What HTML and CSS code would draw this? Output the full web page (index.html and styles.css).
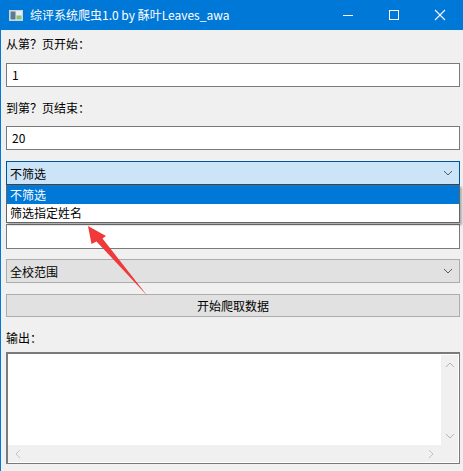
FILE: index.html
```html
<!DOCTYPE html>
<html lang="zh-CN">
<head>
<meta charset="utf-8">
<title>综评系统爬虫1.0 by 酥叶Leaves_awa</title>
<link rel="stylesheet" href="styles.css">
</head>
<body>
<div class="window">
  <div class="titlebar">
    <svg class="app-icon" width="14" height="11" viewBox="0 0 14 11">
      <rect x="0.5" y="0.5" width="13" height="10" fill="#dfe8ee" stroke="#c9d6de"/>
      <rect x="1.5" y="1.5" width="5" height="8" fill="#5d7b8c"/>
      <rect x="7.5" y="1.5" width="5" height="4" fill="#e9f0f3"/>
      <rect x="7.5" y="5.5" width="5" height="4" fill="#8fbf73"/>
    </svg>
    <div class="title">综评系统爬虫1.0 by 酥叶Leaves_awa</div>
    <div class="controls">
      <div class="ctl">
        <svg width="12" height="12" viewBox="0 0 12 12"><line x1="1" y1="6.5" x2="11" y2="6.5" stroke="#fff" stroke-width="1"/></svg>
      </div>
      <div class="ctl">
        <svg width="12" height="12" viewBox="0 0 12 12"><rect x="1.5" y="1.5" width="9" height="9" fill="none" stroke="#fff" stroke-width="1"/></svg>
      </div>
      <div class="ctl">
        <svg width="12" height="12" viewBox="0 0 12 12"><path d="M1 1 L11 11 M11 1 L1 11" stroke="#fff" stroke-width="1.1"/></svg>
      </div>
    </div>
  </div>

  <div class="content">
    <div class="label first">从第？页开始：</div>
    <div class="input input-a">1</div>
    <div class="label second">到第？页结束：</div>
    <div class="input input-b">20</div>

    <div class="combo combo-open">
      <span>不筛选</span>
      <svg class="chev" width="10" height="6" viewBox="0 0 10 6"><polyline points="1,1 5,5 9,1" fill="none" stroke="#5a5a5a" stroke-width="1"/></svg>
      <div class="dropdown">
        <div class="item selected">不筛选</div>
        <div class="item">筛选指定姓名</div>
      </div>
    </div>

    <div class="spacer"></div>
    <div class="input input-c"></div>

    <div class="combo combo-plain">
      <span>全校范围</span>
      <svg class="chev" width="10" height="6" viewBox="0 0 10 6"><polyline points="1,1 5,5 9,1" fill="none" stroke="#5a5a5a" stroke-width="1"/></svg>
    </div>

    <div class="button">开始爬取数据</div>

    <div class="label out">输出：</div>
    <div class="textarea">
      <div class="text-body"></div>
      <div class="vscroll">
        <svg width="10" height="6" viewBox="0 0 10 6"><polyline points="1,5 5,1 9,5" fill="none" stroke="#b4b4b4" stroke-width="1"/></svg>
        <svg width="10" height="6" viewBox="0 0 10 6"><polyline points="1,1 5,5 9,1" fill="none" stroke="#b4b4b4" stroke-width="1"/></svg>
      </div>
      <div class="hscroll">
        <svg width="6" height="10" viewBox="0 0 6 10"><polyline points="5,1 1,5 5,9" fill="none" stroke="#c4c4c4" stroke-width="1"/></svg>
        <svg width="6" height="10" viewBox="0 0 6 10"><polyline points="1,1 5,5 1,9" fill="none" stroke="#c4c4c4" stroke-width="1"/></svg>
      </div>
      <div class="corner"></div>
    </div>
  </div>

  <svg class="arrow" width="463" height="471" viewBox="0 0 463 471">
    <polygon points="88,226 106,236 102.5,238.5 147.5,296 96.5,241.5 91.5,244" fill="#f0393a"/>
  </svg>
</div>
</body>
</html>
```

FILE: styles.css
```css
* { box-sizing: border-box; }

html, body {
  margin: 0;
  padding: 0;
  background: #f0f0f0;
}

body {
  font-family: "Noto Sans CJK SC", "Noto Sans", sans-serif;
  font-size: 12px;
  color: #000;
}

.window {
  position: relative;
  width: 463px;
  height: 471px;
  background: #f0f0f0;
  border-left: 1px solid #0078d7;
  overflow: hidden;
}

.titlebar {
  height: 30px;
  background: #0078d7;
  display: flex;
  align-items: center;
  color: #fff;
  margin-left: -1px;
}

.app-icon {
  margin-left: 9px;
  margin-right: 7px;
}

.title {
  flex: 1;
  font-size: 12px;
  line-height: 30px;
  white-space: nowrap;
}

.controls {
  display: flex;
  height: 30px;
}

.ctl {
  width: 46px;
  height: 30px;
  display: flex;
  align-items: center;
  justify-content: center;
}

.content {
  padding: 0 3px 0 5px;
  display: flex;
  flex-direction: column;
}

.label {
  height: 18px;
  line-height: 18px;
  white-space: nowrap;
  flex: none;
}

.label.first { margin-top: 5px; }
.label.second { margin-top: 12px; }
.label.out { margin-top: 12px; }

.input {
  flex: none;
  height: 24px;
  background: #fff;
  border: 1px solid #7a7a7a;
  padding-left: 5px;
  line-height: 22px;
}

.input-a { margin-top: 10px; }
.input-b { margin-top: 9px; }
.input-c { margin-top: 11px; height: 25px; }

.combo {
  flex: none;
  position: relative;
  height: 24px;
  padding-left: 3px;
  display: flex;
  align-items: center;
  justify-content: space-between;
  padding-right: 6px;
}

.combo-open {
  margin-top: 11px;
  background: #cce4f7;
  border: 1px solid #005499;
}

.combo-plain {
  margin-top: 10px;
  background: #e1e1e1;
  border: 1px solid #adadad;
}

.dropdown {
  position: absolute;
  top: 23px;
  left: -1px;
  right: -1px;
  background: #fff;
  border: 1px solid #646464;
  box-shadow: 2px 2px 2px rgba(0, 0, 0, 0.28);
  z-index: 2;
}

.item {
  height: 18px;
  line-height: 18px;
  padding-left: 3px;
  white-space: nowrap;
}

.item.selected {
  background: #0078d7;
  color: #fff;
}

.spacer {
  flex: none;
  height: 28px;
}

.button {
  flex: none;
  margin-top: 11px;
  height: 23px;
  background: #e1e1e1;
  border: 1px solid #adadad;
  text-align: center;
  line-height: 21px;
}

.textarea {
  flex: none;
  margin-top: 5px;
  height: 112px;
  background: #fff;
  border-top: 2px solid #7a7a7a;
  border-left: 2px solid #7a7a7a;
  border-right: 1px solid #7a7a7a;
  border-bottom: 1px solid #7a7a7a;
  padding: 1px 1px 1px 0;
  display: grid;
  grid-template-columns: 1fr 17px;
  grid-template-rows: 1fr 17px;
}

.text-body {
  background: #fff;
}

.vscroll {
  background: #f0f0f0;
  display: flex;
  flex-direction: column;
  align-items: center;
  justify-content: space-between;
  padding: 7px 0 6px;
}

.hscroll {
  background: #f0f0f0;
  display: flex;
  align-items: center;
  justify-content: space-between;
  padding: 0 7px 0 7px;
}

.corner {
  background: #f0f0f0;
}

.arrow {
  position: absolute;
  left: -1px;
  top: 0;
  pointer-events: none;
  z-index: 5;
}
```
